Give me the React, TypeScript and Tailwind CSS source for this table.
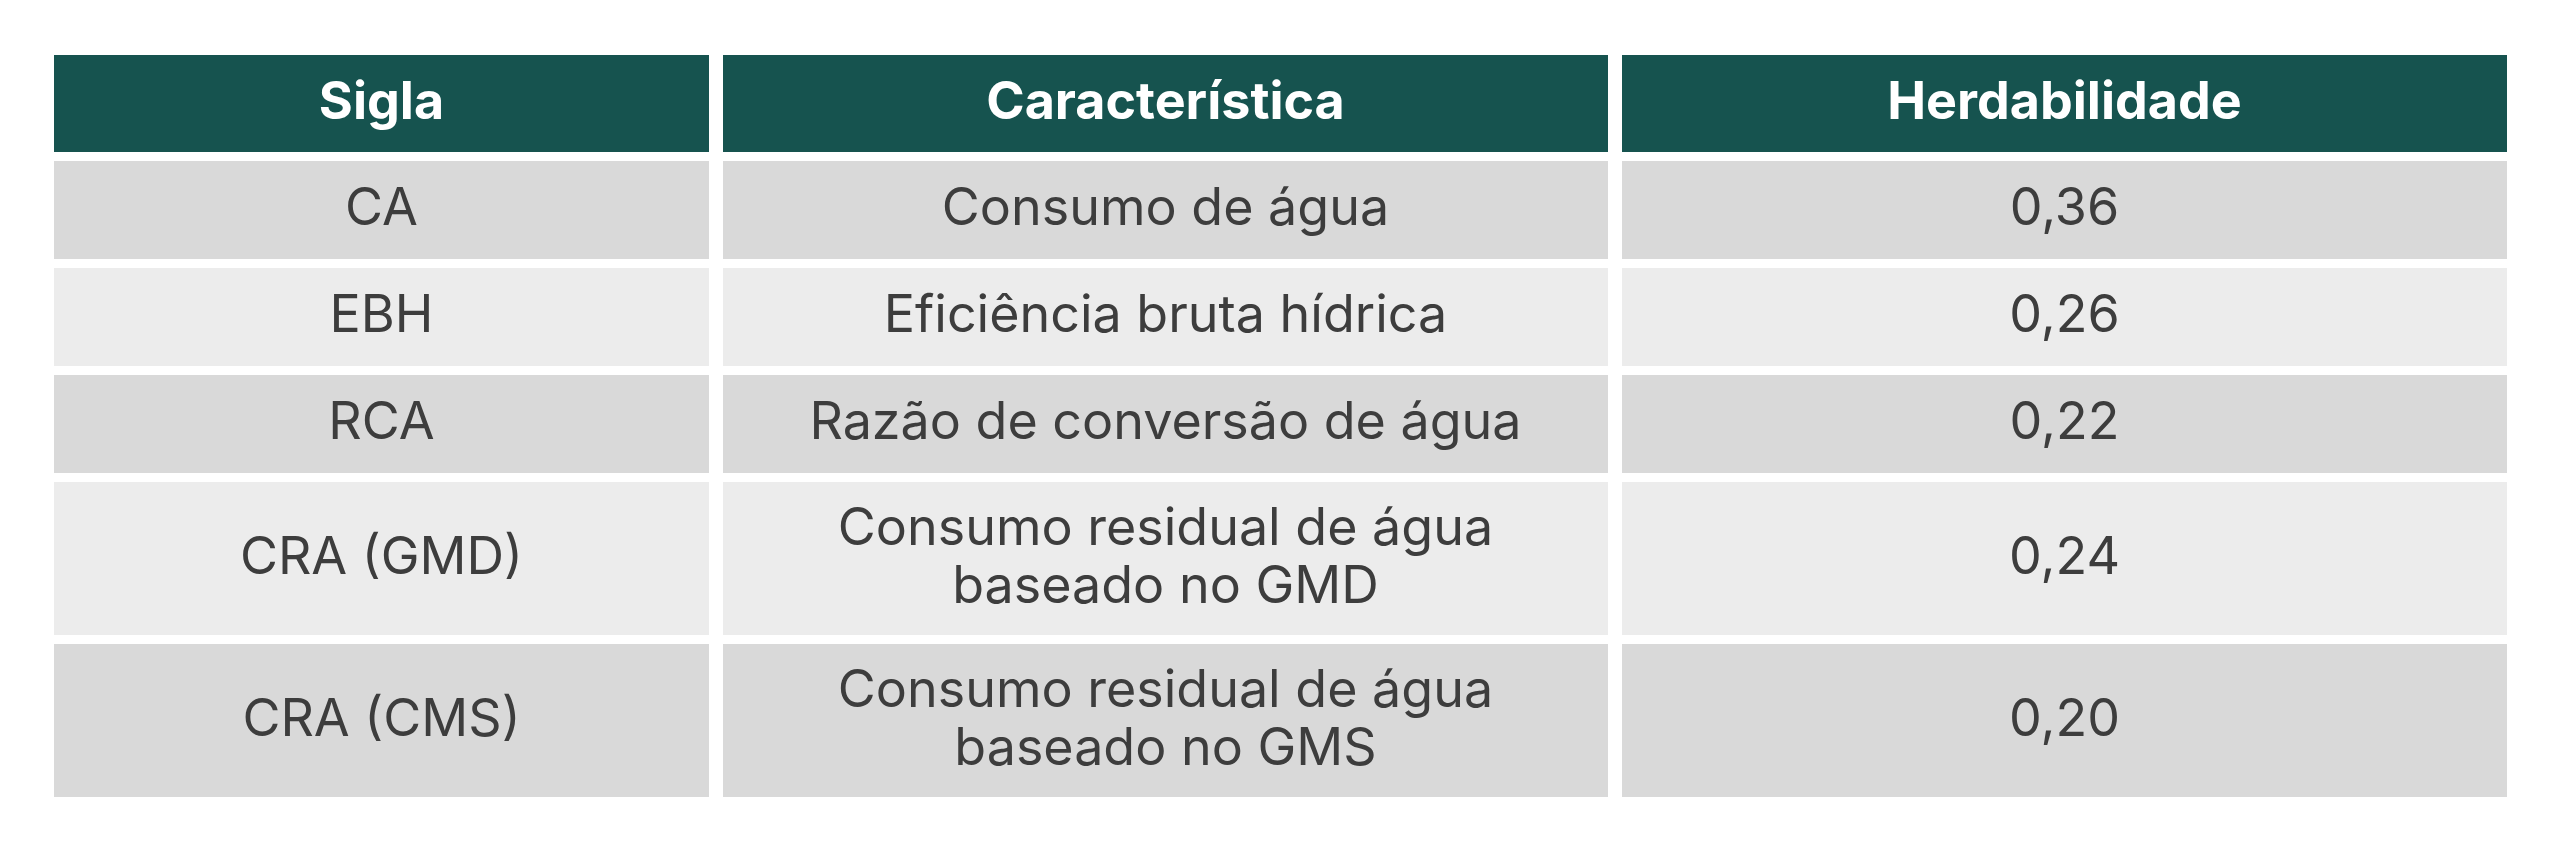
import React from "react";

const rows: { sigla: string; carac: string[]; h: string; tall?: boolean }[] = [
  { sigla: "CA", carac: ["Consumo de água"], h: "0,36" },
  { sigla: "EBH", carac: ["Eficiência bruta hídrica"], h: "0,26" },
  { sigla: "RCA", carac: ["Razão de conversão de água"], h: "0,22" },
  { sigla: "CRA (GMD)", carac: ["Consumo residual de água", "baseado no GMD"], h: "0,24", tall: true },
  { sigla: "CRA (CMS)", carac: ["Consumo residual de água", "baseado no GMS"], h: "0,20", tall: true },
];

export default function App() {
  return (
    <div className="w-[2560px] h-[854px] bg-white pt-[55px] pl-[54px]" style={{ fontFamily: "Inter, 'Noto Sans', sans-serif" }}>
      <div className="grid grid-cols-[655px_885px_885px] gap-x-[14px] gap-y-[9px] w-[2453px]">
        {["Sigla", "Característica", "Herdabilidade"].map((t) => (
          <div key={t} className="h-[97px] pb-[6px] bg-[#16534f] flex items-center justify-center text-white font-bold text-[52px] leading-none">
            {t}
          </div>
        ))}
        {rows.map((r, i) => {
          const bg = i % 2 === 0 ? "bg-[#d9d9d9]" : "bg-[#ececec]";
          const h = r.tall ? "h-[153px]" : "h-[98px]";
          return (
            <React.Fragment key={r.sigla}>
              <div className={`${bg} ${h} pb-[6px] flex items-center justify-center text-[#3d3d3d] text-[52px] leading-[58px]`}>{r.sigla}</div>
              <div className={`${bg} ${h} pb-[6px] flex flex-col items-center justify-center text-[#3d3d3d] text-[52px] leading-[58px] text-center`}>
                {r.carac.map((c) => (
                  <span key={c}>{c}</span>
                ))}
              </div>
              <div className={`${bg} ${h} pb-[6px] flex items-center justify-center text-[#3d3d3d] text-[52px] leading-[58px]`}>{r.h}</div>
            </React.Fragment>
          );
        })}
      </div>
    </div>
  );
}
